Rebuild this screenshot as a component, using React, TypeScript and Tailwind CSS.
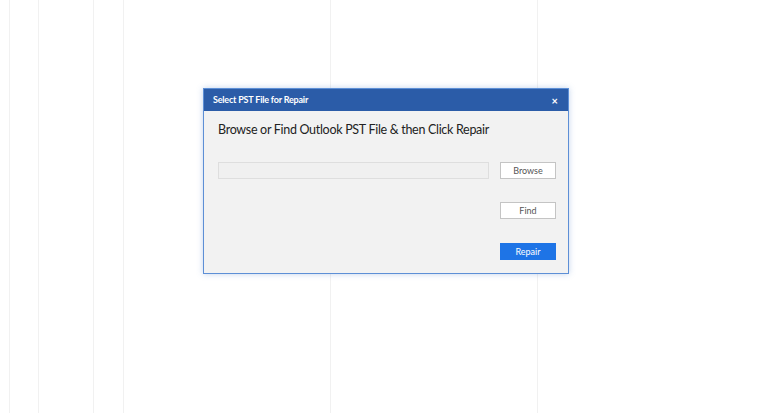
export default function App() {
  const cols = [10, 29, 55, 30, 207, 207];
  return (
    <div className="relative w-[766px] h-[413px] bg-white overflow-hidden" style={{ fontFamily: 'Lato, "Noto Sans", sans-serif' }}>
      {/* background grid */}
      <div className="flex h-full">
        {cols.map((w, i) => (
          <div key={i} className="h-full border-r border-[#f1f1f1]" style={{ width: w }} />
        ))}
        <div className="flex-1" />
      </div>

      {/* Dialog */}
      <div className="absolute left-[203px] top-[88px] w-[366px] h-[186px] border border-[#5d8fd6] bg-[#f2f2f2] shadow-[0_0_6px_rgba(80,130,200,0.35)] flex flex-col">
        <div className="h-[22px] bg-[#2b5ca8] flex items-center justify-between pl-[9px] pr-[10px]">
          <span className="text-white text-[9px] font-bold tracking-[-0.2px]">Select PST File for Repair</span>
          <span className="text-white text-[11px] font-bold leading-none">×</span>
        </div>
        <div className="flex-1 pl-[14px] pr-[12px] pt-[10px]">
          <div className="text-[12.5px] text-[#222] leading-[18px] tracking-[-0.3px] whitespace-nowrap">Browse or Find Outlook PST File &amp; then Click Repair</div>
          <div className="flex items-center gap-[11px] mt-[23px]">
            <div className="w-[271px] h-[17px] bg-[#f0f0f0] border border-[#dedede]" />
            <button className="w-[56px] h-[17px] bg-white border border-[#c4c4c4] text-[9px] text-[#555] leading-none">Browse</button>
          </div>
          <div className="flex justify-end mt-[23px]">
            <button className="w-[56px] h-[17px] bg-white border border-[#c4c4c4] text-[9px] text-[#555] leading-none">Find</button>
          </div>
          <div className="flex justify-end mt-[24px]">
            <button className="w-[56px] h-[17px] bg-[#1e74e6] text-[9px] text-white leading-none">Repair</button>
          </div>
        </div>
      </div>
    </div>
  );
}
